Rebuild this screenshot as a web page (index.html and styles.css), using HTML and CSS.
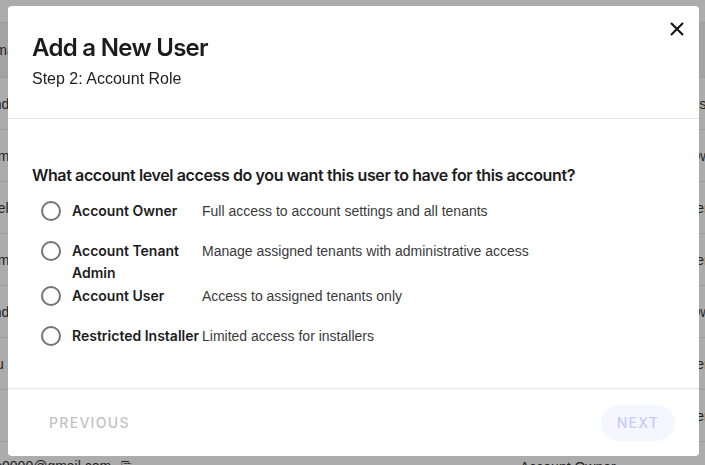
FILE: index.html
```html
<!DOCTYPE html>
<html lang="en">
<head>
    <meta charset="UTF-8">
    <meta name="viewport" content="width=device-width, initial-scale=1.0">
    <title>Users - Add a New User</title>
    <link rel="stylesheet" href="styles.css">
</head>
<body>
    <!-- users table sitting behind the dialog -->
    <div class="page">
        <div class="table">
            <div class="row head"><span class="cell left">Email</span><span class="cell right">Role</span></div>
            <div class="row"><span class="cell left">andrew.v.smith</span><span class="cell right">Account Use</span></div>
            <div class="row"><span class="cell left">tomlj</span><span class="cell right">Account Owner</span></div>
            <div class="row"><span class="cell left">mel.j</span><span class="cell right">Account Tenant Admin</span></div>
            <div class="row"><span class="cell left">tomlj</span><span class="cell right">Account Tenant Admin</span></div>
            <div class="row"><span class="cell left">andrew.v.</span><span class="cell right">Account Owner</span></div>
            <div class="row"><span class="cell left">jvu</span><span class="cell right">Account Tenant Admin</span></div>
            <div class="row"><span class="cell left">in</span><span class="cell right">Account Tenant Admin</span></div>
            <div class="row last">
                <span class="cell email">brooks0000@gmail.com <span class="copy">&#x2398;</span></span>
                <span class="cell role">Account Owner</span>
            </div>
        </div>
    </div>

    <div class="backdrop"></div>

    <div class="modal" role="dialog">
        <div class="modal-header">
            <h1>Add a New User</h1>
            <p class="step">Step 2: Account Role</p>
            <button class="close" aria-label="Close">
                <svg width="14" height="14" viewBox="0 0 14 14" fill="none" stroke="#111" stroke-width="2">
                    <path d="M1 1l12 12M13 1L1 13"/>
                </svg>
            </button>
        </div>

        <div class="modal-body">
            <p class="question">What account level access do you want this user to have for this account?</p>
            <div class="options">
                <label class="option">
                    <span class="radio"></span>
                    <span class="name">Account Owner</span>
                    <span class="desc">Full access to account settings and all tenants</span>
                </label>
                <label class="option">
                    <span class="radio"></span>
                    <span class="name">Account Tenant Admin</span>
                    <span class="desc">Manage assigned tenants with administrative access</span>
                </label>
                <label class="option">
                    <span class="radio"></span>
                    <span class="name">Account User</span>
                    <span class="desc">Access to assigned tenants only</span>
                </label>
                <label class="option">
                    <span class="radio"></span>
                    <span class="name">Restricted Installer</span>
                    <span class="desc">Limited access for installers</span>
                </label>
            </div>
        </div>

        <div class="modal-footer">
            <button class="btn-prev" disabled>Previous</button>
            <button class="btn-next" disabled>Next</button>
        </div>
    </div>
</body>
</html>
```

FILE: styles.css
```css
* {
    margin: 0;
    padding: 0;
    box-sizing: border-box;
}

body {
    font-family: 'Liberation Sans', Arial, sans-serif;
    background: #fff;
    color: #222;
    overflow: hidden;
}

/* background table */
.page {
    height: 100vh;
    overflow: hidden;
}

.table {
    width: 100%;
    padding-top: 22px;
}

.row {
    height: 52px;
    display: flex;
    align-items: center;
    justify-content: space-between;
    border-bottom: 1px solid #e6e6e6;
    font-size: 14px;
    color: #333;
    white-space: nowrap;
}

.row.head {
    height: 56px;
    background: #f2f2f2;
    border-top: 1px solid #e6e6e6;
}

.cell.left {
    margin-left: -14px;
    width: 110px;
}

.cell.right {
    margin-right: -60px;
    width: 130px;
}

.row.last {
    justify-content: flex-start;
    padding-bottom: 2px;
}

.cell.email {
    margin-left: -40px;
    width: 560px;
}

.copy {
    font-size: 13px;
    margin-left: 6px;
}

.backdrop {
    position: fixed;
    inset: 0;
    background: rgba(0, 0, 0, 0.325);
}

/* dialog */
.modal {
    position: fixed;
    left: 8px;
    top: 6px;
    width: 691px;
    height: 450px;
    background: #fff;
    border-radius: 4px;
    display: flex;
    flex-direction: column;
}

.modal-header {
    position: relative;
    padding: 27px 24px 0;
    height: 113px;
    border-bottom: 1px solid #e6e6e6;
}

.modal-header h1 {
    font-family: 'Inter', sans-serif;
    font-size: 24px;
    font-weight: 600;
    letter-spacing: -0.7px;
    color: #1c1c1c;
    line-height: 29px;
}

.step {
    margin-top: 8px;
    font-size: 16px;
    color: #222;
}

.close {
    position: absolute;
    top: 16px;
    right: 15px;
    width: 14px;
    height: 14px;
    border: none;
    background: none;
    cursor: pointer;
}

.close svg {
    display: block;
}

.modal-body {
    flex: 1;
    padding: 44px 24px 0;
}

.question {
    font-family: 'Inter', sans-serif;
    font-size: 16px;
    font-weight: 600;
    letter-spacing: -0.38px;
    line-height: 24px;
    color: #1c1c1c;
}

.options {
    margin-top: 4px;
    padding-left: 9px;
}

.option {
    display: flex;
    align-items: flex-start;
    min-height: 40px;
    cursor: pointer;
}

.radio {
    flex: none;
    width: 20px;
    height: 20px;
    margin: 10px 11px 10px 0;
    border: 2px solid #737373;
    border-radius: 50%;
}

.name {
    flex: none;
    width: 130px;
    margin: 9px 0 -8px;
    font-family: 'Inter', sans-serif;
    font-size: 14px;
    font-weight: 600;
    line-height: 22px;
    color: #1c1c1c;
}

.desc {
    margin-top: 9px;
    font-size: 14px;
    line-height: 22px;
    color: #3a3a3a;
}

.modal-footer {
    height: 68px;
    border-top: 1px solid #e6e6e6;
    display: flex;
    align-items: center;
    justify-content: space-between;
    padding: 0 24px;
}

.modal-footer button {
    font-family: 'Inter', sans-serif;
    font-size: 14px;
    font-weight: 500;
    letter-spacing: 1.3px;
    text-transform: uppercase;
    border: none;
    height: 36px;
    border-radius: 18px;
}

.btn-prev {
    background: none;
    color: #c2c2c2;
    padding: 0 17px;
}

.btn-next {
    background: #f5f6ff;
    color: #c6cbfa;
    width: 74px;
}
```
